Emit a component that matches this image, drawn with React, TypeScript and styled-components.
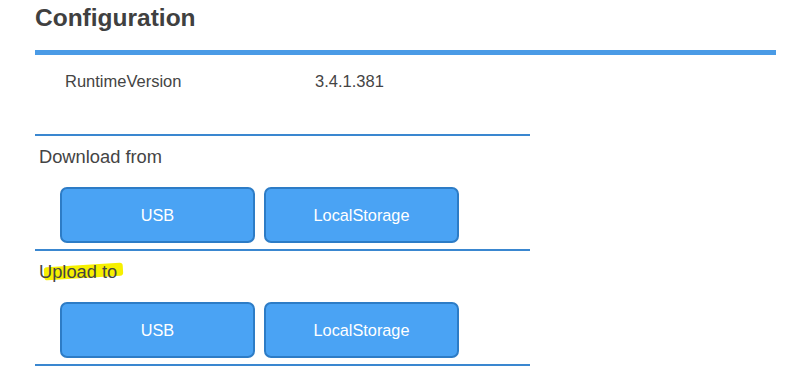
import React from "react";
import styled, { createGlobalStyle } from "styled-components";

const GlobalStyle = createGlobalStyle`
  body {
    margin: 0;
    background: #ffffff;
    font-family: "Liberation Sans", Arial, sans-serif;
    color: #444444;
  }
`;

const Page = styled.div`
  padding-left: 35px;
`;

const Title = styled.h2`
  width: 741px;
  margin: 0;
  padding: 4px 0 18px;
  font-size: 24.5px;
  line-height: 28px;
  font-weight: 700;
  color: #404040;
  border-bottom: 5px solid #4a9be6;
`;

const Panel = styled.div`
  width: 495px;
`;

const InfoTable = styled.div`
  height: 63px;
  padding: 16px 0 0 30px;
  border-bottom: 2px solid #3a87d0;
`;

const InfoRow = styled.div`
  display: grid;
  grid-template-columns: 250px 1fr;
  font-size: 16.5px;
  line-height: 20px;
`;

const Section = styled.div`
  padding: 11px 0 6px;
  border-bottom: 2px solid #3a87d0;
`;

const Label = styled.div`
  padding-left: 4px;
  font-size: 18.3px;
  line-height: 20px;
  color: #444444;
`;

const Marked = styled.span`
  position: relative;
  z-index: 0;

  &::before {
    content: "";
    position: absolute;
    z-index: -1;
    left: 5px;
    right: -6px;
    top: 4px;
    height: 13px;
    background: #f6f000;
    border-radius: 3px;
    transform: rotate(-3.5deg);
  }
`;

const ButtonRow = styled.div`
  display: flex;
  gap: 9px;
  margin-top: 20px;
  padding-left: 25px;
`;

const Button = styled.button`
  width: 195px;
  height: 56px;
  box-sizing: border-box;
  border: 2px solid #2d7cc6;
  border-radius: 7px;
  background: #4aa3f4;
  color: #ffffff;
  font-family: "Liberation Sans", Arial, sans-serif;
  font-size: 16.3px;
  cursor: pointer;
`;

const targets = ["USB", "LocalStorage"];

const App = () => {
  return (
    <Page>
      <GlobalStyle />
      <Title>Configuration</Title>
      <Panel>
        <InfoTable>
          <InfoRow>
            <span>RuntimeVersion</span>
            <span>3.4.1.381</span>
          </InfoRow>
        </InfoTable>
        <Section>
          <Label>Download from</Label>
          <ButtonRow>
            {targets.map((t) => (
              <Button key={t}>{t}</Button>
            ))}
          </ButtonRow>
        </Section>
        <Section>
          <Label>
            <Marked>Upload to</Marked>
          </Label>
          <ButtonRow>
            {targets.map((t) => (
              <Button key={t}>{t}</Button>
            ))}
          </ButtonRow>
        </Section>
      </Panel>
    </Page>
  );
};

export default App;
